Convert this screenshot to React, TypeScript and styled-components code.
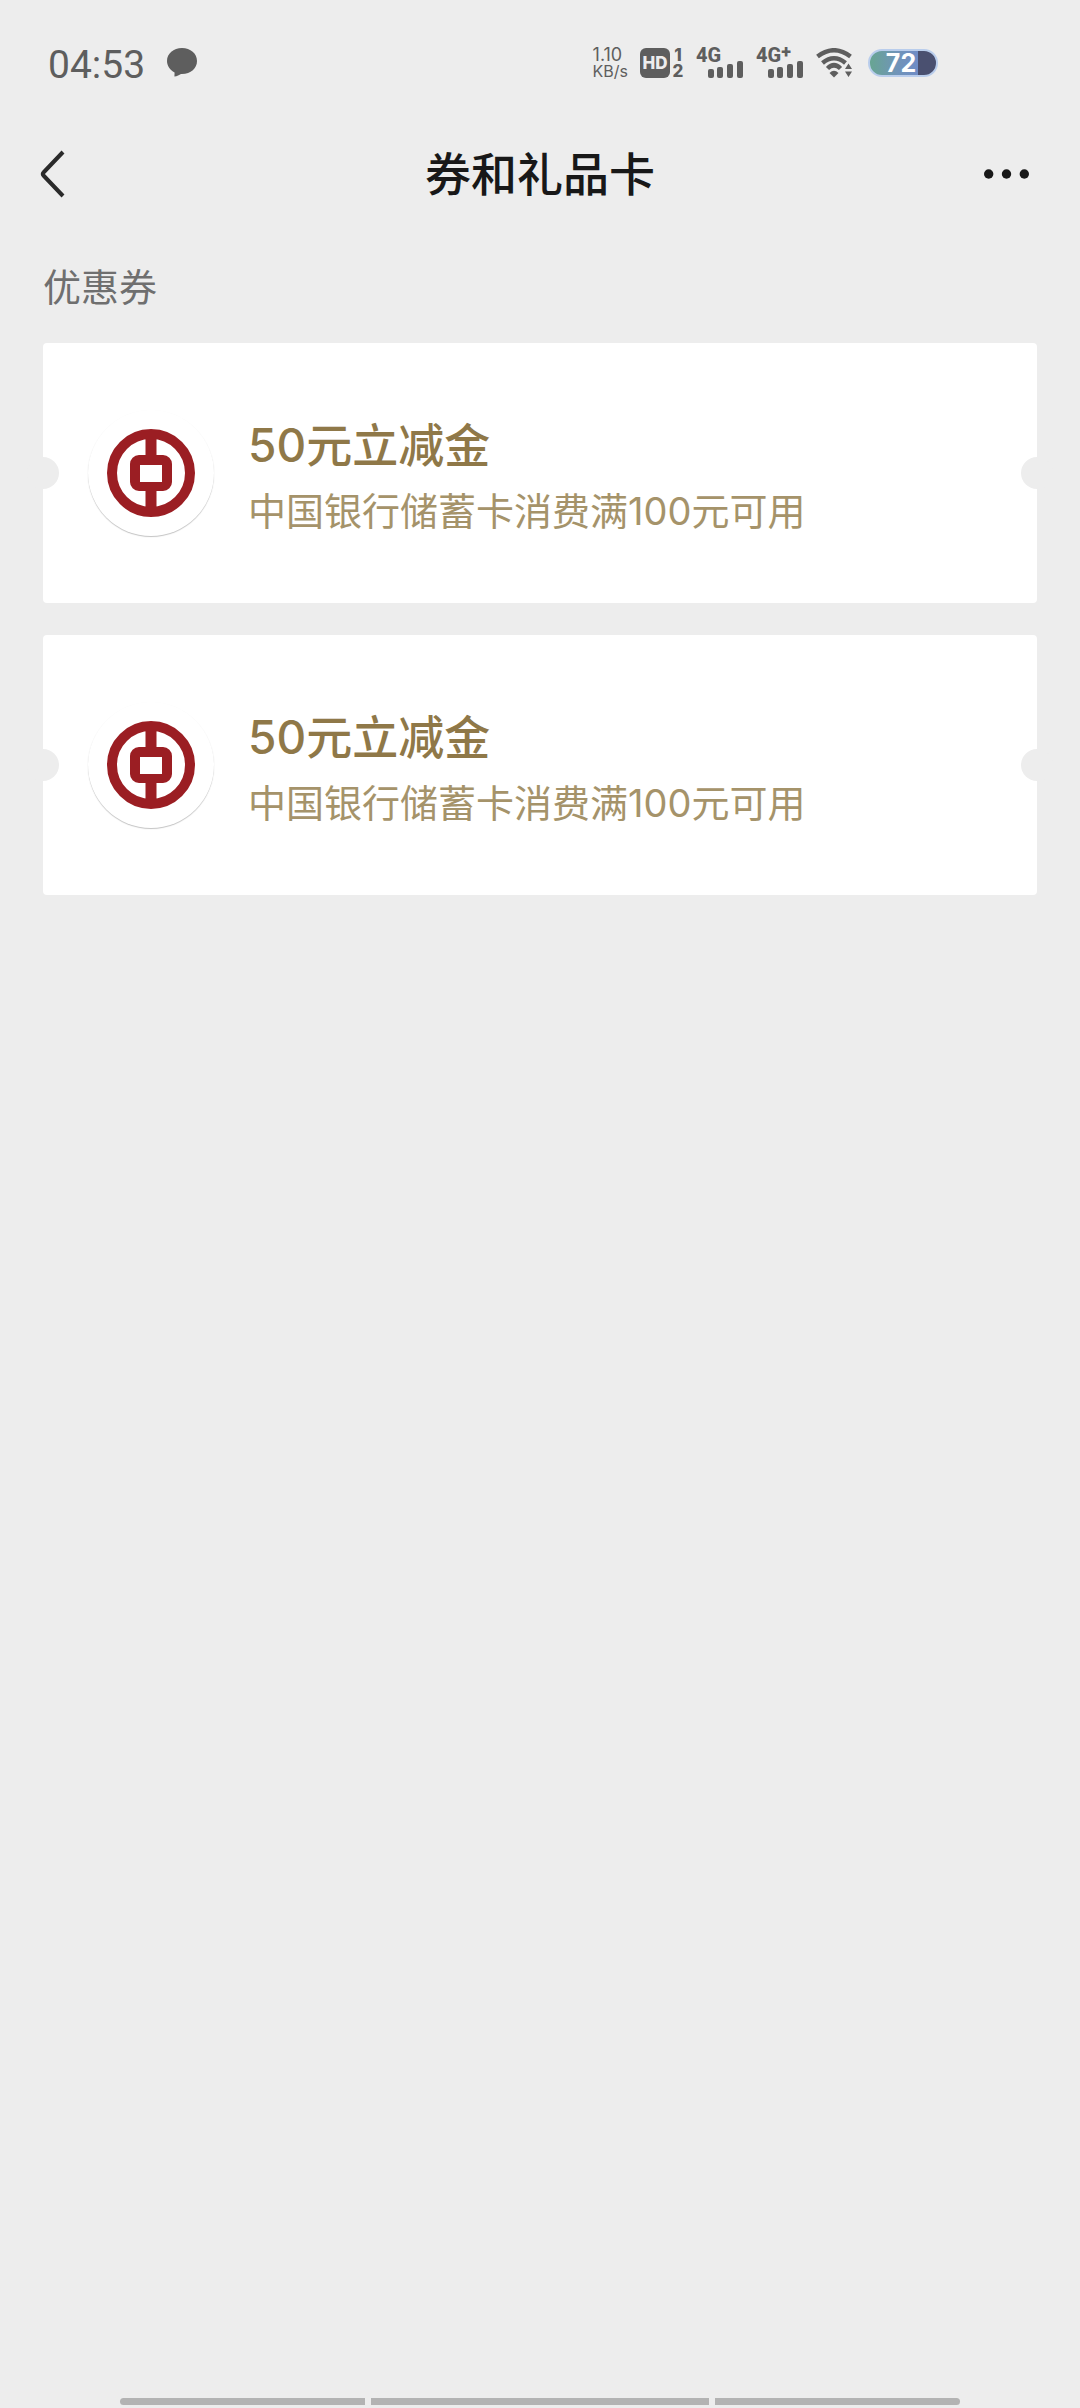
import React from 'react';
import styled, { createGlobalStyle } from 'styled-components';

const GlobalStyle = createGlobalStyle`
  *, *::before, *::after { box-sizing: border-box; }
  html, body { margin: 0; background: #ededed; }
  body { font-family: Inter, "Noto Sans CJK SC", sans-serif; }
  h1, h2, h3, p, ul { margin: 0; padding: 0; }
`;

const Screen = styled.div`
  min-height: 100vh;
  display: flex;
  flex-direction: column;
  background: #ededed;
`;

const StatusBar = styled.header`
  display: flex;
  align-items: center;
  justify-content: space-between;
  height: 126px;
  padding: 0 142px 0 48px;
  color: #5e5e5e;
`;

const StatusGroup = styled.div<{ $gap: number }>`
  display: flex;
  align-items: center;
  gap: ${p => p.$gap}px;
`;

const Clock = styled.time`
  padding-top: 4px;
  font: 400 39px/44px Roboto, sans-serif;
`;

const Speed = styled.div`
  display: flex;
  flex-direction: column;
  font-size: 18px;
  line-height: 16px;
  text-align: left;
`;

const SpeedUnit = styled.span`
  font-size: 16px;
`;

const HdGroup = styled.div`
  display: flex;
  gap: 2px;
  height: 30px;
`;

const HdBadge = styled.span`
  display: flex;
  align-items: center;
  justify-content: center;
  width: 30px;
  border-radius: 6px;
  background: #5e5e5e;
  color: #ededed;
  font-size: 17px;
  font-weight: 800;
  line-height: 30px;
`;

const SimNumbers = styled.span`
  display: flex;
  flex-direction: column;
  justify-content: space-between;
  align-items: center;
  width: 12px;
  font-size: 17px;
  font-weight: 800;
  line-height: 14px;
`;

const SignalBox = styled.div`
  display: flex;
  flex-direction: column;
  width: 48px;
  height: 30px;
`;

const SignalLabel = styled.span`
  height: 13px;
  font: 800 20px/14px Roboto, sans-serif;
  white-space: nowrap;

  sup {
    font-size: 18px;
    line-height: 0;
    vertical-align: 4px;
  }
`;

const SignalBars = styled.svg`
  align-self: flex-end;
  display: block;
  flex: none;
`;

const Battery = styled.div`
  display: flex;
  align-items: center;
  justify-content: center;
  width: 70px;
  height: 28px;
  padding-right: 4px;
  border: 2px solid #b9cdec;
  border-radius: 14px;
  background: linear-gradient(90deg, #68a592 0, #7094b8 40%, #6f8cc6 73%, #4a5070 73%);
  color: #fff;
  font-size: 25px;
  font-weight: 700;
  line-height: 24px;
`;

const NavBar = styled.nav`
  display: grid;
  grid-template-columns: 96px 1fr 96px;
  align-items: center;
  height: 96px;
`;

const NavButton = styled.button`
  display: flex;
  align-items: center;
  height: 96px;
  border: 0;
  background: none;
  color: #181818;
  cursor: pointer;
`;

const BackButton = styled(NavButton)`
  padding: 0 0 0 39px;
`;

const MoreButton = styled(NavButton)`
  justify-content: flex-end;
  padding: 0 51px 0 0;
`;

const Title = styled.h1`
  color: #181818;
  font-size: 46px;
  font-weight: 500;
  line-height: 64px;
  text-align: center;
`;

const Main = styled.main`
  flex: 1;
  padding: 38px 43px;
`;

const SectionTitle = styled.h2`
  color: #6f6f6f;
  font-size: 38px;
  font-weight: 400;
  line-height: 54px;
`;

const CouponList = styled.ul`
  display: flex;
  flex-direction: column;
  gap: 32px;
  margin-top: 29px;
  list-style: none;
`;

const Coupon = styled.li`
  position: relative;
  display: flex;
  align-items: center;
  gap: 34px;
  min-height: 260px;
  padding: 0 45px;
  border-radius: 4px;
  background: #fff;

  &::before,
  &::after {
    content: '';
    position: absolute;
    top: 50%;
    width: 32px;
    height: 32px;
    margin-top: -16px;
    border-radius: 50%;
    background: #ededed;
  }
  &::before { left: -16px; }
  &::after { right: -16px; }
`;

const LogoDisc = styled.div`
  display: flex;
  align-items: center;
  justify-content: center;
  flex: none;
  width: 126px;
  height: 126px;
  border-radius: 50%;
  background: #fff;
  box-shadow: 0 1px 1px rgba(0, 0, 0, 0.24);
`;

const CouponText = styled.div`
  display: flex;
  flex-direction: column;
  gap: 4px;
  padding-top: 8px;
`;

const CouponName = styled.h3`
  color: #8f7848;
  font-size: 46px;
  font-weight: 500;
  line-height: 64px;
`;

const CouponNote = styled.p`
  color: #a5936a;
  font-size: 38px;
  line-height: 60px;
`;

const GestureBar = styled.footer`
  display: grid;
  grid-template-columns: 245fr 338fr 245fr;
  gap: 6px;
  padding: 0 120px 3px;
`;

const GestureSegment = styled.span<{ $radius: string }>`
  height: 7px;
  border-radius: ${p => p.$radius};
  background: #b3b3b3;
`;

const ChatBubble = () => (
  <svg width="30" height="30" viewBox="0 0 30 30" fill="currentColor" aria-hidden="true">
    <path d="M15 0C6.500 0 0 5.600 0 13c0 4.600 2.800 8.900 7.600 11.400L7.400 28.500c2.800-.3 4.800-1.500 6.600-2.600C23.500 26.300 30 20.500 30 13S23.500 0 15 0z" />
  </svg>
);

const Wifi = () => (
  <svg width="40" height="30" viewBox="0 0 40 30" aria-hidden="true">
    <g fill="none" stroke="currentColor" strokeWidth="4.500">
      <path d="M1.500 8.500Q18-4 34.500 8.500" />
      <path d="M6.500 15Q18 5.500 29.500 15" />
      <path d="M11.500 20.500Q18 14 24.500 20.500" />
    </g>
    <path d="M13.500 25Q18 20.500 22.500 25L18 29.500z" fill="currentColor" />
    <path d="M29 21l3.500-5.500L36 21zM29 23.500l3.500 5.500 3.500-5.500z" fill="currentColor" />
  </svg>
);

const Signal = ({ plus = false }: { plus?: boolean }) => (
  <SignalBox>
    <SignalLabel>4G{plus && <sup>+</sup>}</SignalLabel>
    <SignalBars width="36" height="17" viewBox="0 0 36 17" fill="currentColor" aria-hidden="true">
      <rect x="0" y="8" width="6" height="9" rx="2" />
      <rect x="9" y="6" width="6" height="11" rx="2" />
      <rect x="19" y="3" width="6" height="14" rx="2" />
      <rect x="29" y="0" width="6" height="17" rx="2" />
    </SignalBars>
  </SignalBox>
);

const BankLogo = () => (
  <svg width="88" height="88" viewBox="0 0 88 88" role="img" aria-label="中国银行">
    <g fill="none" stroke="#9b1e23">
      <circle cx="44" cy="44" r="39" strokeWidth="10" />
      <rect x="28" y="31" width="32" height="26" rx="4" strokeWidth="10" />
      <path d="M44 8v20M44 60v20" strokeWidth="11" />
    </g>
    <path d="M33 36h22v17H33z" fill="#fff" />
  </svg>
);

const coupons = [
  { id: 1, name: '50元立减金', note: '中国银行储蓄卡消费满100元可用' },
  { id: 2, name: '50元立减金', note: '中国银行储蓄卡消费满100元可用' },
];

export default function App() {
  return (
    <Screen>
      <GlobalStyle />
      <StatusBar>
        <StatusGroup $gap={22}>
          <Clock>04:53</Clock>
          <ChatBubble />
        </StatusGroup>
        <StatusGroup $gap={12}>
          <Speed>
            <span>1.10</span>
            <SpeedUnit>KB/s</SpeedUnit>
          </Speed>
          <HdGroup>
            <HdBadge>HD</HdBadge>
            <SimNumbers>
              <span>1</span>
              <span>2</span>
            </SimNumbers>
          </HdGroup>
          <Signal />
          <Signal plus />
          <Wifi />
          <Battery>72</Battery>
        </StatusGroup>
      </StatusBar>
      <NavBar>
        <BackButton type="button" aria-label="返回">
          <svg width="26" height="48" viewBox="0 0 26 48" fill="none" aria-hidden="true">
            <path d="M24 2L4.500 22.500Q3 24 4.500 25.500L24 46" stroke="#2a2a2a" strokeWidth="4" />
          </svg>
        </BackButton>
        <Title>券和礼品卡</Title>
        <MoreButton type="button" aria-label="更多">
          <svg width="48" height="10" viewBox="0 0 48 10" fill="currentColor" aria-hidden="true">
            <circle cx="5" cy="5" r="5" />
            <circle cx="24" cy="5" r="5" />
            <circle cx="43" cy="5" r="5" />
          </svg>
        </MoreButton>
      </NavBar>
      <Main>
        <SectionTitle>优惠券</SectionTitle>
        <CouponList>
          {coupons.map(c => (
            <Coupon key={c.id}>
              <LogoDisc>
                <BankLogo />
              </LogoDisc>
              <CouponText>
                <CouponName>{c.name}</CouponName>
                <CouponNote>{c.note}</CouponNote>
              </CouponText>
            </Coupon>
          ))}
        </CouponList>
      </Main>
      <GestureBar aria-hidden="true">
        <GestureSegment $radius="4px 0 0 4px" />
        <GestureSegment $radius="0" />
        <GestureSegment $radius="0 4px 4px 0" />
      </GestureBar>
    </Screen>
  );
}
